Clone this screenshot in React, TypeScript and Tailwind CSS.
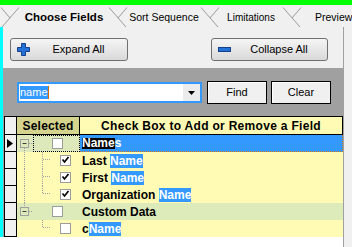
import type { ReactNode } from 'react';

const TAB_LINE = '#9a9a9a';
const DOT = '#a0a0a0';

const TabSep = ({ front }: { front: 'left' | 'right' }) => (
	<svg width="20" height="22" viewBox="0 0 20 22" className="shrink-0" stroke={TAB_LINE} strokeWidth="1" fill="none">
		{front === 'left' ? (
			<>
				<path d="M1 2.5 L18 22" />
				<path d="M19 2.5 L10 13" />
			</>
		) : (
			<>
				<path d="M19 2.5 L2 22" />
				<path d="M1 2.5 L10 13" />
			</>
		)}
	</svg>
);

const PlusIcon = () => (
	<svg width="13" height="13" viewBox="0 0 13 13" className="shrink-0">
		<path d="M4.5 0.5h4v4h4v4h-4v4h-4v-4h-4v-4h4z" fill="#2472d8" stroke="#17408a" strokeWidth="1" />
	</svg>
);

const MinusIcon = () => (
	<svg width="13" height="5" viewBox="0 0 13 5" className="shrink-0">
		<rect x="0.5" y="0.5" width="12" height="4" fill="#2472d8" stroke="#17408a" strokeWidth="1" />
	</svg>
);

const ToolButton = ({ icon, label, className }: { icon: ReactNode; label: string; className: string }) => (
	<button
		className={`flex h-[23px] shrink-0 items-center rounded-[3px] border border-[#707070] bg-linear-to-b from-[#f5f5f5] to-[#d9d9d9] pl-[6px] text-[11px] text-black ${className}`}
	>
		{icon}
		<span className="flex-1 text-center">{label}</span>
	</button>
);

const Checkbox = ({ x, checked }: { x: number; checked?: boolean }) => (
	<>
		<rect x={x + 0.5} y="3.5" width="10" height="10" fill="white" stroke="#9c9c9c" />
		{checked && <path d={`M${x + 2.5} 7.5 L${x + 4.5} 10 L${x + 8.5} 5`} stroke="black" strokeWidth="1.7" fill="none" />}
	</>
);

const ExpandBox = () => (
	<>
		<rect x="3.5" y="4.5" width="8" height="8" fill="none" stroke="#a0a0a0" />
		<path d="M5.5 8.5 H9.5" stroke="#404040" />
		<path d="M12 8.5 H16" stroke={DOT} strokeDasharray="1 1" />
	</>
);

type TreeKind = 'rootFirst' | 'child' | 'childLast' | 'rootLast' | 'childEnd';

const TreeCell = ({ kind, checked }: { kind: TreeKind; checked?: boolean }) => (
	<svg width="63" height="17" viewBox="0 0 63 17" className="absolute left-0 top-0">
		{kind === 'rootFirst' && (
			<>
				<ExpandBox />
				<path d="M7.5 13 V17" stroke={DOT} strokeDasharray="1 1" />
				<Checkbox x={35} checked={checked} />
			</>
		)}
		{kind === 'rootLast' && (
			<>
				<path d="M7.5 0 V4" stroke={DOT} strokeDasharray="1 1" />
				<ExpandBox />
				<Checkbox x={35} checked={checked} />
			</>
		)}
		{(kind === 'child' || kind === 'childLast') && <path d="M7.5 0 V17" stroke={DOT} strokeDasharray="1 1" />}
		{kind === 'child' && <path d="M25.5 0 V17" stroke={DOT} strokeDasharray="1 1" />}
		{(kind === 'childLast' || kind === 'childEnd') && <path d="M25.5 0 V8" stroke={DOT} strokeDasharray="1 1" />}
		{(kind === 'child' || kind === 'childLast' || kind === 'childEnd') && (
			<>
				<path d="M26 7.5 H34" stroke={DOT} strokeDasharray="1 1" />
				<Checkbox x={43} checked={checked} />
			</>
		)}
	</svg>
);

const Hit = ({ children }: { children: ReactNode }) => (
	<span className="inline-block bg-[#3399ff] leading-[14px] text-white">{children}</span>
);

const RowHeader = ({ current }: { current?: boolean }) => (
	<div className="flex w-[13px] shrink-0 items-center border-x border-b border-black bg-[#f0f0f0] pl-[2px]">
		{current && (
			<svg width="6" height="9" viewBox="0 0 6 9">
				<path d="M0 0 L6 4.5 L0 9z" fill="black" />
			</svg>
		)}
	</div>
);

const GridRow = ({
	kind,
	checked,
	rowBg,
	current,
	children,
}: {
	kind: TreeKind;
	checked?: boolean;
	rowBg: string;
	current?: boolean;
	children: ReactNode;
}) => (
	<div className="flex h-[17px]">
		<RowHeader current={current} />
		<div className={`relative w-[63px] shrink-0 ${current ? 'bg-[#dde9bb]' : rowBg}`}>
			<TreeCell kind={kind} checked={checked} />
			{current && <div className="absolute left-[16px] top-0 h-[17px] w-[47px] border border-dotted border-black" />}
		</div>
		<div
			className={`flex flex-1 items-center whitespace-nowrap pl-[2px] text-[12px] font-bold ${
				current ? 'border-r border-b border-dotted border-[#d07a30] bg-[#3399ff] text-white' : `${rowBg} text-black`
			}`}
		>
			{children}
		</div>
	</div>
);

export default function App() {
	return (
		<div className="h-[247px] w-[352px] overflow-hidden bg-[#f0f0f0] font-['Liberation_Sans',Arial,sans-serif] text-black">
			<div className="h-[5px] bg-[#00ff00]" />

			<div className="flex h-[22px] whitespace-nowrap">
				<TabSep front="right" />
				<div className="flex w-[88px] shrink-0 items-center justify-center pt-[3px] text-[11.5px] font-bold">
					Choose Fields
				</div>
				<TabSep front="left" />
				<div className="flex w-[72px] shrink-0 items-center justify-center pt-[3px] text-[10.5px]">Sort Sequence</div>
				<TabSep front="left" />
				<div className="flex w-[62px] shrink-0 items-center justify-center pt-[3px] text-[10px]">Limitations</div>
				<TabSep front="left" />
				<div className="flex shrink-0 items-center pl-[13px] pt-[3px] text-[10.5px]">Preview</div>
			</div>

			<div className="flex h-[220px]">
				<div className="flex w-[343px] shrink-0 flex-col">
					<div className="flex h-[210px]">
						<div className="w-[3px] shrink-0 bg-[#00ffff]" />
						<div className="flex w-[340px] shrink-0 flex-col bg-[#a0a0a0]">
							<div className="flex h-[41px] shrink-0 items-start bg-[#f0f0f0] pt-[11px]">
								<ToolButton icon={<PlusIcon />} label="Expand All" className="ml-[7px] w-[118px]" />
								<ToolButton icon={<MinusIcon />} label="Collapse All" className="ml-[83px] w-[117px]" />
							</div>

							<div className="flex h-[48px] shrink-0 items-start pl-[14px]">
								<div className="mt-[14px] flex h-[21px] w-[185px] shrink-0 items-center border-2 border-[#3399ff] bg-white">
									<div className="flex flex-1 items-center pl-[1px]">
										<span className="bg-[#3399ff] text-[11px] leading-[13px] text-white">name</span>
										<span className="h-[13px] w-[1px] bg-[#d86a00]" />
									</div>
									<div className="flex h-full w-[17px] items-center justify-center bg-[#ececec]">
										<svg width="7" height="4" viewBox="0 0 7 4">
											<path d="M0 0 H7 L3.5 4z" fill="black" />
										</svg>
									</div>
								</div>
								<button className="ml-[5px] mt-[13px] h-[23px] w-[60px] shrink-0 border border-black bg-[#f0f0f0] text-[11px] shadow-[inset_1px_1px_0_#ffffff]">
									Find
								</button>
								<button className="ml-[4px] mt-[13px] h-[23px] w-[60px] shrink-0 border border-black bg-[#f0f0f0] text-[11px] shadow-[inset_1px_1px_0_#ffffff]">
									Clear
								</button>
							</div>

							<div className="ml-[1px] flex w-[339px] flex-col">
								<div className="flex h-[19px] border-y border-r border-black text-[12px] font-bold">
									<div className="w-[13px] shrink-0 border-x border-black bg-[#f0f0f0]" />
									<div className="flex w-[63px] shrink-0 items-center justify-center border-r border-black bg-[#d4d48e] tracking-[0.2px]">
										Selected
									</div>
									<div className="flex flex-1 items-center justify-center whitespace-nowrap bg-[#fffbb4] tracking-[0.3px]">
										Check Box to Add or Remove a Field
									</div>
								</div>

								<GridRow kind="rootFirst" rowBg="bg-[#fffbb4]" current>
									<span>
										<span className="inline-block bg-black leading-[11px]">Name</span>s
									</span>
								</GridRow>
								<GridRow kind="child" checked rowBg="bg-[#fffbb4]">
									<span>
										Last <Hit>Name</Hit>
									</span>
								</GridRow>
								<GridRow kind="child" checked rowBg="bg-[#fffbb4]">
									<span>
										First <Hit>Name</Hit>
									</span>
								</GridRow>
								<GridRow kind="childLast" checked rowBg="bg-[#fffbb4]">
									<span>
										Organization <Hit>Name</Hit>
									</span>
								</GridRow>
								<GridRow kind="rootLast" rowBg="bg-[#dcebb9]">
									<span>Custom Data</span>
								</GridRow>
								<GridRow kind="childEnd" rowBg="bg-[#fffbb4]">
									<span>
										c<Hit>Name</Hit>
									</span>
								</GridRow>
							</div>
						</div>
					</div>
					<div className="h-[10px] bg-white" />
				</div>
				<div className="w-[9px] shrink-0 border-l border-[#a0a0a0] bg-[#f0f0f0]" />
			</div>
		</div>
	);
}
